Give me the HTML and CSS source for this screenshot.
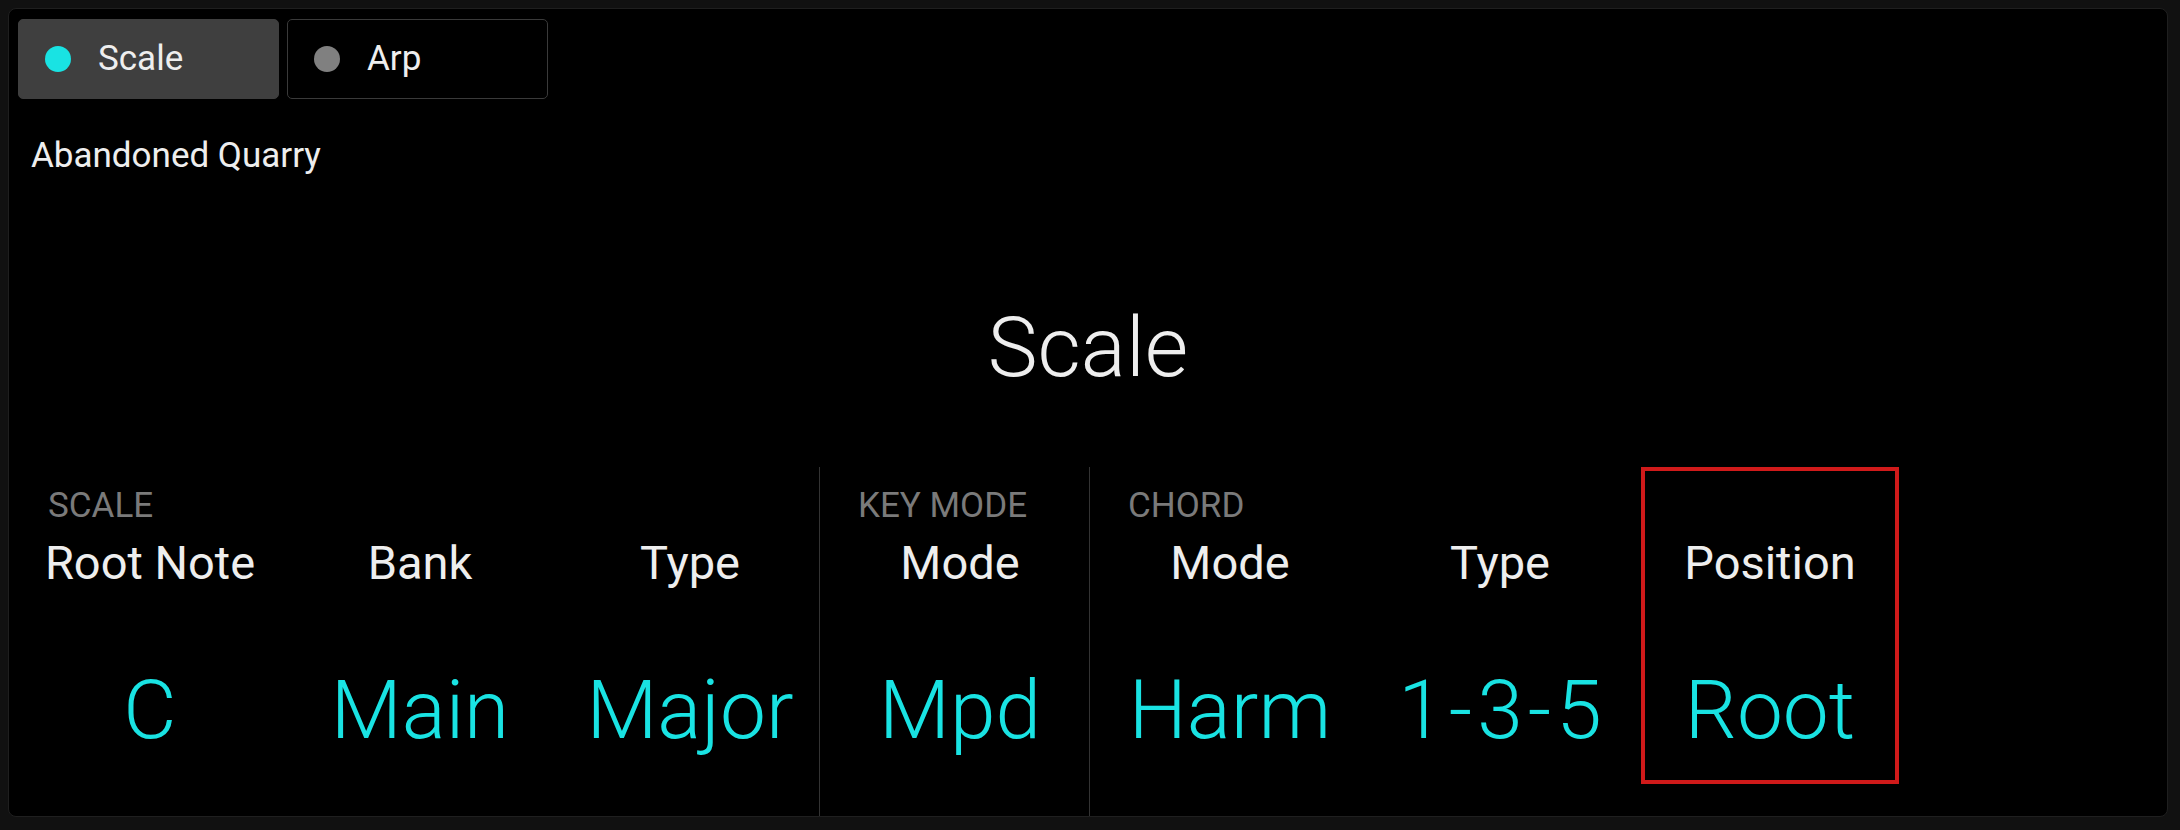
FILE: index.html
```html
<!DOCTYPE html>
<html>
<head>
<meta charset="utf-8">
<link rel="stylesheet" href="styles.css">
</head>
<body>
<div class="panel">
  <div class="tabs">
    <div class="tab active"><span class="dot"></span><span class="tab-text">Scale</span></div>
    <div class="tab"><span class="dot"></span><span class="tab-text">Arp</span></div>
  </div>
  <div class="preset">Abandoned Quarry</div>
  <div class="title">Scale</div>
  <div class="groups">
    <div class="group first">
      <div class="col"><div class="label">SCALE</div><div class="name">Root Note</div><div class="value">C</div></div>
      <div class="col"><div class="label"></div><div class="name">Bank</div><div class="value">Main</div></div>
      <div class="col"><div class="label"></div><div class="name">Type</div><div class="value">Major</div></div>
    </div>
    <div class="group">
      <div class="col"><div class="label">KEY MODE</div><div class="name">Mode</div><div class="value">Mpd</div></div>
    </div>
    <div class="group">
      <div class="col"><div class="label">CHORD</div><div class="name">Mode</div><div class="value">Harm</div></div>
      <div class="col"><div class="label"></div><div class="name">Type</div><div class="value spaced">1-3-5</div></div>
      <div class="col selected"><div class="label"></div><div class="name">Position</div><div class="value">Root</div></div>
    </div>
  </div>
</div>
</body>
</html>
```

FILE: styles.css
```css
html, body {
  margin: 0;
  padding: 0;
  background: #111111;
}
body {
  width: 2180px;
  height: 830px;
  padding: 8px;
  box-sizing: border-box;
  font-family: Roboto, "Liberation Sans", sans-serif;
  color: #eeeeee;
}
.panel {
  width: 2160px;
  height: 809px;
  box-sizing: border-box;
  background: #000000;
  border: 1px solid #1f1f1f;
  border-radius: 8px;
  padding: 10px 9px 0 9px;
  display: flex;
  flex-direction: column;
  overflow: hidden;
}
.tabs {
  display: flex;
  gap: 8px;
}
.tab {
  width: 261px;
  height: 80px;
  box-sizing: border-box;
  border: 1px solid #3a3a3a;
  border-radius: 5px;
  display: flex;
  align-items: center;
  padding-left: 26px;
  gap: 27px;
}
.tab.active {
  background: #3f3f3f;
  border-color: #3f3f3f;
}
.dot {
  width: 26px;
  height: 26px;
  border-radius: 50%;
  background: #808080;
  flex: none;
}
.tab.active .dot {
  background: #19e3e3;
}
.tab-text {
  font-size: 35px;
  line-height: 40px;
  color: #eeeeee;
}
.preset {
  margin-top: 36px;
  padding-left: 13px;
  font-size: 35px;
  line-height: 41px;
}
.title {
  margin-top: 122px;
  text-align: center;
  font-size: 84px;
  font-weight: 300;
  line-height: 100px;
}
.groups {
  margin-top: 69px;
  flex: 1;
  display: flex;
}
.group {
  display: flex;
  align-items: flex-start;
  gap: 12px;
  border-left: 1px solid #333333;
  padding-left: 11px;
}
.group.first {
  border-left: none;
  padding-left: 3px;
}
.col {
  width: 258px;
  height: 317px;
  box-sizing: border-box;
  border: 4px solid transparent;
  padding-top: 16px;
}
.col.selected {
  border-color: #d01a1a;
}
.label {
  height: 38px;
  font-size: 35px;
  line-height: 38px;
  color: #7a7a7a;
  padding-left: 23px;
}
.name {
  margin-top: 13px;
  text-align: center;
  font-size: 47px;
  line-height: 50px;
  color: #eeeeee;
}
.value {
  margin-top: 74px;
  text-align: center;
  font-size: 82px;
  font-weight: 300;
  line-height: 96px;
  color: #19e3e3;
}
.value.spaced {
  letter-spacing: 5px;
  text-indent: 5px;
}
```
